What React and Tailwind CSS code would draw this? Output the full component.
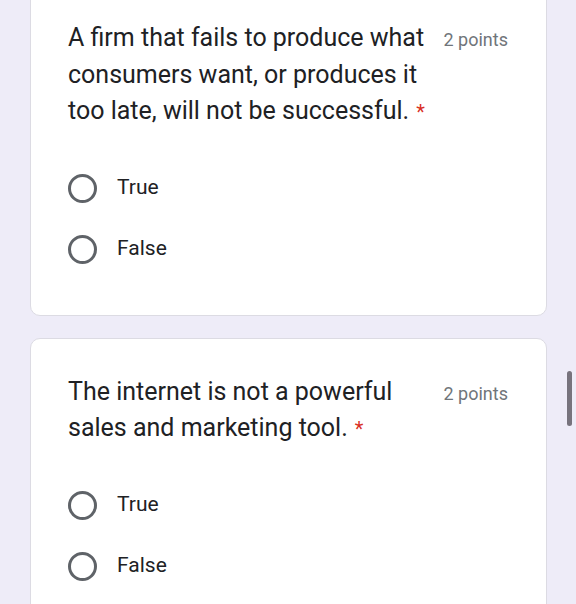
import React from 'react';

const questions = [
  {
    id: 'q1',
    title: 'A firm that fails to produce what consumers want, or produces it too late, will not be successful.',
    points: 2,
  },
  {
    id: 'q2',
    title: 'The internet is not a powerful sales and marketing tool.',
    points: 2,
  },
];

const options = ['True', 'False'];

function RadioOption({ label }) {
  return (
    <label className="flex h-[61px] items-center">
      <span className="h-[29px] w-[29px] shrink-0 rounded-full border-[3px] border-[#5f6368]" />
      <span className="ml-[20px] text-[21px] text-[#202124]">{label}</span>
    </label>
  );
}

function QuestionCard({ question }) {
  return (
    <div className="rounded-[10px] border border-[#dcdbe3] bg-white pt-[35px] pr-[38px] pb-[35px] pl-[37px]">
      <div className="flex items-baseline">
        <div className="w-[366px] text-[25px] leading-[36.5px] text-[#202124]">
          {question.title}
          <span className="ml-[7px] text-[20px] leading-none text-[#d93025]">*</span>
        </div>
        <div className="ml-auto shrink-0 text-[18px] text-[#70757a]">{question.points} points</div>
      </div>
      <div className="mt-[28px]">
        {options.map((opt) => (
          <RadioOption key={opt} label={opt} />
        ))}
      </div>
    </div>
  );
}

export default function App() {
  return (
    <div className="relative h-[604px] overflow-hidden bg-[#eeecf8] font-['Roboto',sans-serif]">
      <div className="-mt-[16px] flex flex-col gap-[22px] pl-[30px] pr-[29px]">
        {questions.map((q) => (
          <QuestionCard key={q.id} question={q} />
        ))}
      </div>
      {/* scroll indicator */}
      <div className="absolute top-[371px] right-[4px] h-[55px] w-[5px] rounded-full bg-[#77737d]" />
    </div>
  );
}
